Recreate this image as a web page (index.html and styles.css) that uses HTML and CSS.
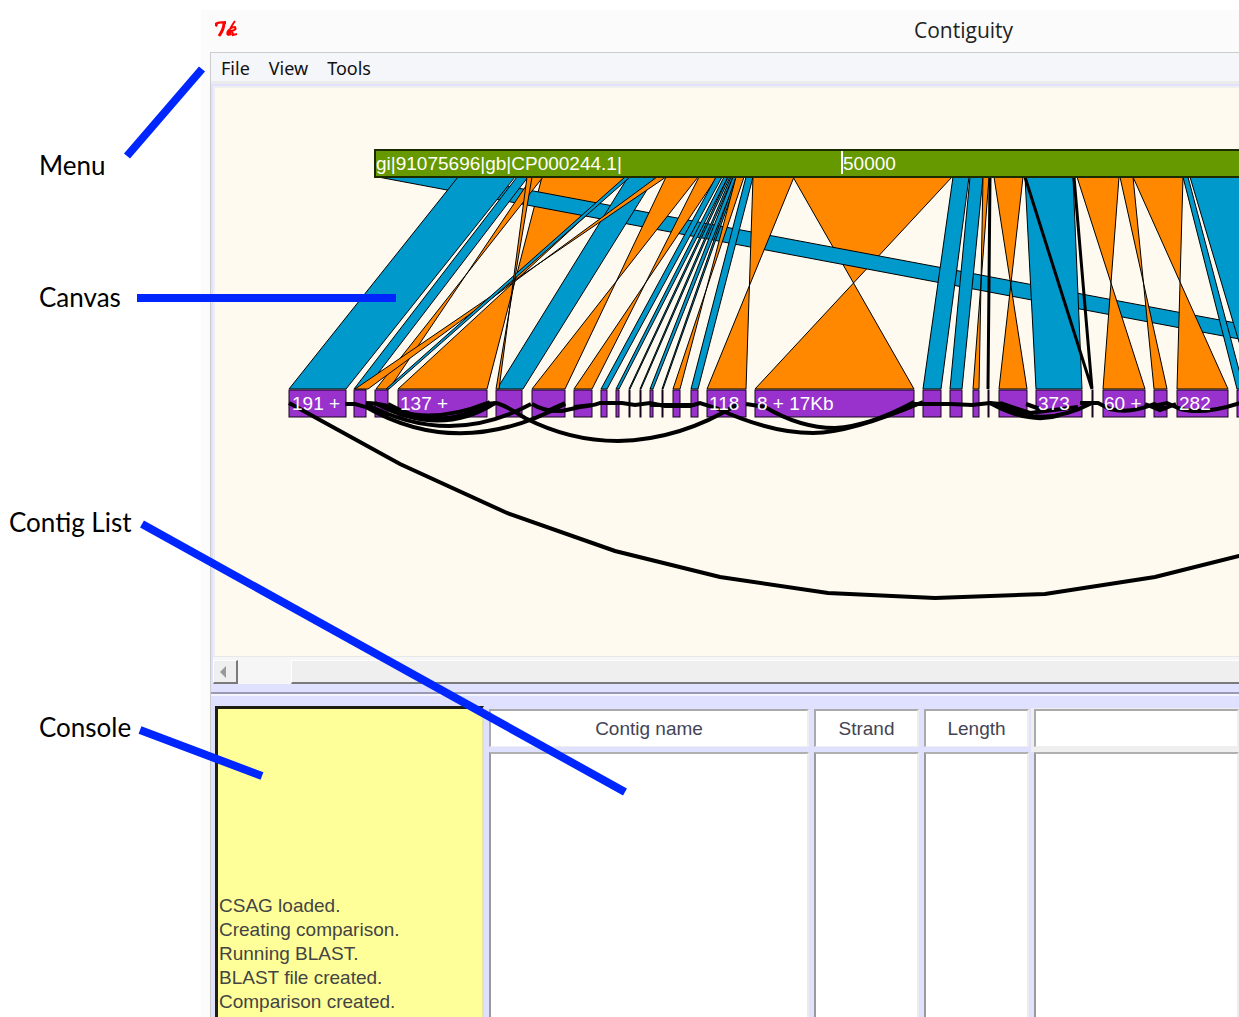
FILE: index.html
```html
<!DOCTYPE html>
<html lang="en">
<head>
<meta charset="utf-8">
<title>Contiguity</title>
<link rel="stylesheet" href="styles.css">
</head>
<body>
<main class="figure">
  <aside class="labels">
    <p class="label label-menu">Menu</p>
    <p class="label label-canvas">Canvas</p>
    <p class="label label-list">Contig List</p>
    <p class="label label-console">Console</p>
  </aside>

  <section class="window">
    <header class="titlebar">
      <svg class="tk" width="24" height="20" viewBox="0 0 24 20" aria-hidden="true">
        <path d="M1 6V3Q3 1 12 1V4Q6 3 4 4L3 7Z" fill="#f00"/>
        <path d="M10 3Q10 9 5 16" fill="none" stroke="#f00" stroke-width="3"/>
        <path d="M21 1Q18 5 14 13M13 13Q16 7 21 7Q23 10 17 11Q19 12 19 15L23 14" fill="none" stroke="#f00" stroke-width="2"/>
        <path d="M12 14L16 9L18 15L14 16Z" fill="#f00"/>
      </svg>
      <h1 class="title">Contiguity</h1>
    </header>

    <div class="client">
      <nav class="menubar">
        <button class="menu" type="button">File</button>
        <button class="menu" type="button">View</button>
        <button class="menu" type="button">Tools</button>
      </nav>

      <div class="canvas-pane">
        <svg class="canvas" width="100%" height="568" role="img" aria-label="Contig comparison">
          <g transform="translate(-215 -88)">
            <g class="hit">
              <path class="rev" d="M542 177H628L398 389H487Z"/>
              <path class="rev" d="M793 177H952L755 389H914Z"/>
              <path class="fwd" d="M378 177H459L1587 389H1505Z"/>
              <path class="fwd" d="M458 177H515L346 389H289Z"/>
              <path class="fwd" d="M517 177H528L366 389H354Z"/>
              <path class="rev" d="M532 177H543L376 389H389Z"/>
              <path class="fwd" d="M628 177H655L523 389H497Z"/>
              <path class="rev" d="M657 177H666L355 389H368Z"/>
              <path class="fwd" d="M625 177H630L389 389H386Z"/>
              <path class="rev" d="M527 177H532L496 389H499Z"/>
              <path class="rev" d="M666 177H698L532 389H565Z"/>
              <path class="rev" d="M699 177H717L574 389H592Z"/>
              <path class="fwd" d="M716 177H722L607 389H601Z"/>
              <path class="fwd" d="M724 177H728L619 389H616Z"/>
              <path class="fwd" d="M728 177H730L630 389H629Z"/>
              <path class="fwd" d="M731 177H733L641 389H640Z"/>
              <path class="fwd" d="M733 177H737L653 389H650Z"/>
              <path class="fwd" d="M736 177H738L663 389H662Z"/>
              <path class="rev" d="M736 177H744L673 389H680Z"/>
              <path class="fwd" d="M746 177H753L698 389H691Z"/>
              <path class="rev" d="M753 177H794L707 389H746Z"/>
              <path class="fwd" d="M953 177H969L941 389H923Z"/>
              <path class="fwd" d="M970 177H983L962 389H950Z"/>
              <path class="rev" d="M983 177H989L973 389H979Z"/>
              <path class="rev" d="M994 177H1023L999 389H1027Z"/>
              <path class="fwd" d="M1025 177H1073L1082 389H1036Z"/>
              <path class="rev" d="M1077 177H1119L1103 389H1145Z"/>
              <path class="rev" d="M1120 177H1133L1154 389H1167Z"/>
              <path class="rev" d="M1133 177H1183L1177 389H1228Z"/>
              <path class="fwd" d="M1183 177H1188L1244 389H1237Z"/>
              <path class="fwd" d="M1190 177H1300L1400 389H1253Z"/>
            </g>
            <path class="sliver" d="M990 177L988 389M1025 177L1092 389M1074 177L1092 389"/>

            <rect class="reference" x="375" y="150" width="2000" height="27"/>
            <path class="tick" d="M842 151V174"/>
            <text class="name" x="376" y="170">gi|91075696|gb|CP000244.1|</text>
            <text class="name" x="843" y="170">50000</text>

            <g class="contig">
              <rect x="289" y="390" width="57" height="27"/>
              <rect x="354" y="390" width="12" height="27"/>
              <rect x="375" y="390" width="13" height="27"/>
              <rect x="398" y="390" width="89" height="27"/>
              <rect x="496" y="390" width="26" height="27"/>
              <rect x="532" y="390" width="33" height="27"/>
              <rect x="574" y="390" width="18" height="27"/>
              <rect x="601" y="390" width="6" height="27"/>
              <rect x="616" y="390" width="3" height="27"/>
              <rect x="629" y="390" width="1" height="27"/>
              <rect x="640" y="390" width="1" height="27"/>
              <rect x="650" y="390" width="3" height="27"/>
              <rect x="662" y="390" width="1" height="27"/>
              <rect x="673" y="390" width="7" height="27"/>
              <rect x="691" y="390" width="7" height="27"/>
              <rect x="707" y="390" width="39" height="27"/>
              <rect x="755" y="390" width="159" height="27"/>
              <rect x="923" y="390" width="18" height="27"/>
              <rect x="950" y="390" width="12" height="27"/>
              <rect x="973" y="390" width="6" height="27"/>
              <rect x="988" y="390" width="1" height="27"/>
              <rect x="999" y="390" width="28" height="27"/>
              <rect x="1036" y="390" width="46" height="27"/>
              <rect x="1092" y="390" width="1" height="27"/>
              <rect x="1103" y="390" width="42" height="27"/>
              <rect x="1154" y="390" width="13" height="27"/>
              <rect x="1177" y="390" width="51" height="27"/>
              <rect x="1237" y="390" width="80" height="27"/>
            </g>

            <g class="edge">
              <path d="M289 403L300 409L400 464L507 513L615 551L720 577L828 593L935 598L1045 594L1155 577L1239 556L1300 538"/>
              <path d="M345 404H355L366 407Q460 461 565 404"/>
              <path d="M366 404Q450 448 531 404"/>
              <path d="M375 403Q440 438 495 403"/>
              <path d="M366 403Q390 404 400 412Q440 422 487 403"/>
              <path d="M388 404Q440 434 490 402"/>
              <path d="M486 404L496 403Q505 405 525 418Q570 441 618 441Q680 440 738 404"/>
              <path d="M532 404Q545 412 562 411L580 407Q592 406 600 403H622L635 405L650 403L665 406H690L700 403L716 408Q770 433 813 433Q850 433 923 402"/>
              <path d="M545 412L565 403M574 407L592 405M650 405H695"/>
              <path d="M746 404L765 407Q800 428 835 428Q870 426 914 402"/>
              <path d="M914 404H950L972 405L990 403L1000 404Q1040 430 1092 403"/>
              <path d="M990 403Q1030 425 1060 415M1000 403L1030 413L1078 407"/>
              <path d="M1026 404L1040 409M1080 403H1098L1110 409Q1130 414 1154 404L1167 409"/>
              <path d="M1154 406L1167 403L1178 408Q1200 416 1240 403"/>
              <path d="M1145 404L1160 410L1176 404"/>
            </g>

            <text class="name" x="292" y="410">191 +</text>
            <text class="name" x="400" y="410">137 +</text>
            <text class="name" x="709" y="410">118</text>
            <text class="name" x="757" y="410">8 + 17Kb</text>
            <text class="name" x="1038" y="410">373</text>
            <text class="name" x="1104" y="410">60 +</text>
            <text class="name" x="1179" y="410">282</text>
          </g>
        </svg>
        <div class="scrollbar">
          <button class="scroll-left" type="button" aria-label="Scroll left"></button>
          <div class="thumb"></div>
        </div>
      </div>

      <div class="lower">
        <div class="console" role="log">
          <p>CSAG loaded.</p>
          <p>Creating comparison.</p>
          <p>Running BLAST.</p>
          <p>BLAST file created.</p>
          <p>Comparison created.</p>
        </div>
        <table class="contigs">
          <colgroup><col class="col-name"><col class="col-small"><col class="col-small"><col></colgroup>
          <thead>
            <tr><th>Contig name</th><th>Strand</th><th>Length</th><th></th></tr>
          </thead>
          <tbody>
            <tr><td></td><td></td><td></td><td></td></tr>
          </tbody>
        </table>
      </div>
    </div>
  </section>

  <svg class="pointers" width="640" height="800" aria-hidden="true">
    <path d="M127 156L202 69M137 298H396M142 524L625 792M140 730L262 776"/>
  </svg>
</main>
</body>
</html>
```

FILE: styles.css
```css
* { box-sizing: border-box; }

body {
  margin: 0;
  background: #fff;
  font-family: "Liberation Sans", Arial, sans-serif;
  font-size: 19px;
  line-height: 24px;
}

p, h1 { margin: 0; }

.figure {
  position: relative;
  display: grid;
  grid-template-columns: 201px minmax(0, 1fr);
  min-height: 100vh;
  overflow: hidden;
}

/* callout labels */
.labels { padding-top: 149px; }

.label {
  padding-left: 39px;
  font-family: Lato, sans-serif;
  font-size: 26px;
  line-height: 32px;
  color: #000;
  white-space: nowrap;
}
.label-canvas { margin-top: 100px; }
.label-list { margin-top: 193px; padding-left: 9px; }
.label-console { margin-top: 173px; }

.pointers {
  position: absolute;
  top: 0;
  left: 0;
  fill: none;
  stroke: #0026ff;
  stroke-width: 8;
  pointer-events: none;
}

/* window frame */
.window {
  display: flex;
  flex-direction: column;
  margin-top: 10px;
  padding-left: 9px;
  background: #fbfbfb;
}

.titlebar {
  display: flex;
  align-items: center;
  height: 42px;
  padding-bottom: 2px;
}
.tk { margin-left: 4px; }
.title {
  margin-left: 676px;
  font: 400 21px/28px "Open Sans", sans-serif;
  color: #222;
}

.client {
  flex: 1;
  display: flex;
  flex-direction: column;
  border: solid #ccc;
  border-width: 1px 0 0 1px;
  background: #e0e0ff;
}

.menubar {
  display: flex;
  height: 31px;
  padding-left: 10px;
  gap: 19px;
  background: #f4f6f9;
  border-bottom: 3px solid #ebebeb;
}
.menu {
  padding: 2px 0 0;
  border: 0;
  background: none;
  font: 18px/26px "Noto Sans", sans-serif;
  color: #111;
}

/* comparison canvas */
.canvas-pane { padding: 2px 0 0 2px; }
.canvas {
  display: block;
  border: solid #efefef;
  border-width: 2px 0 0 2px;
  box-sizing: content-box;
  background: #fffaf0;
}
.hit { stroke: #000; stroke-width: 1; }
.fwd { fill: #09c; }
.rev { fill: #ff8800; }
.sliver { fill: none; stroke: #000; stroke-width: 3; }
.reference { fill: #690; stroke: #1c2a00; stroke-width: 2; }
.tick { stroke: #fff; stroke-width: 2; }
.contig { fill: #9932cc; stroke: #16041f; stroke-width: 1; }
.edge { fill: none; stroke: #000; stroke-width: 4; }
.name { fill: #fff; font-size: 19px; }

.scrollbar {
  display: flex;
  height: 28px;
  padding-top: 3px;
  gap: 53px;
  background: #f6f6f6;
  border-top: 1px solid #e8e8e8;
}
.scroll-left, .thumb {
  border: solid;
  border-width: 1px 2px 2px 1px;
  border-color: #fff #7a7a7a #7a7a7a #fff;
  background: #efefef;
}
.scroll-left {
  display: flex;
  align-items: center;
  width: 25px;
  padding: 0 0 0 6px;
}
.scroll-left::before {
  content: "";
  border: solid transparent;
  border-width: 6px 6px 6px 0;
  border-right-color: #999;
}
.thumb { flex: 1; border-right: 0; }

/* console and contig list */
.lower {
  flex: 1;
  display: flex;
  margin-top: 8px;
  padding: 12px 0 0 4px;
  border-top: 2px solid #9a9ab4;
  box-shadow: inset 0 2px #f4f4ff;
}

.console {
  display: flex;
  flex-direction: column;
  justify-content: flex-end;
  width: 269px;
  padding: 0 0 3px 1px;
  border: solid;
  border-width: 3px 2px 0 3px;
  border-color: #1e1e12 #e6e6a0;
  border-left-color: #1e1e12;
  background: #ff9;
  color: #444;
}

.contigs {
  flex: 1;
  margin: -2px -5px -5px 0;
  table-layout: fixed;
  border-collapse: separate;
  border-spacing: 5px;
  color: #445;
}
.col-name { width: 320px; }
.col-small { width: 105px; }
.contigs th {
  height: 38px;
  padding: 0;
  border: solid;
  border-width: 2px 2px 1px 2px;
  border-color: #aaa #eee #eee #aaa;
  font-weight: 400;
  background: #fff;
}
.contigs th:last-child { box-shadow: 0 2px 0 3px #efefef; }
.contigs td {
  padding: 0;
  border: solid;
  border-width: 2px 2px 0 2px;
  border-color: #b0b0b0 #ececec #ececec #9a9a9a;
  background: #fff;
}
```
